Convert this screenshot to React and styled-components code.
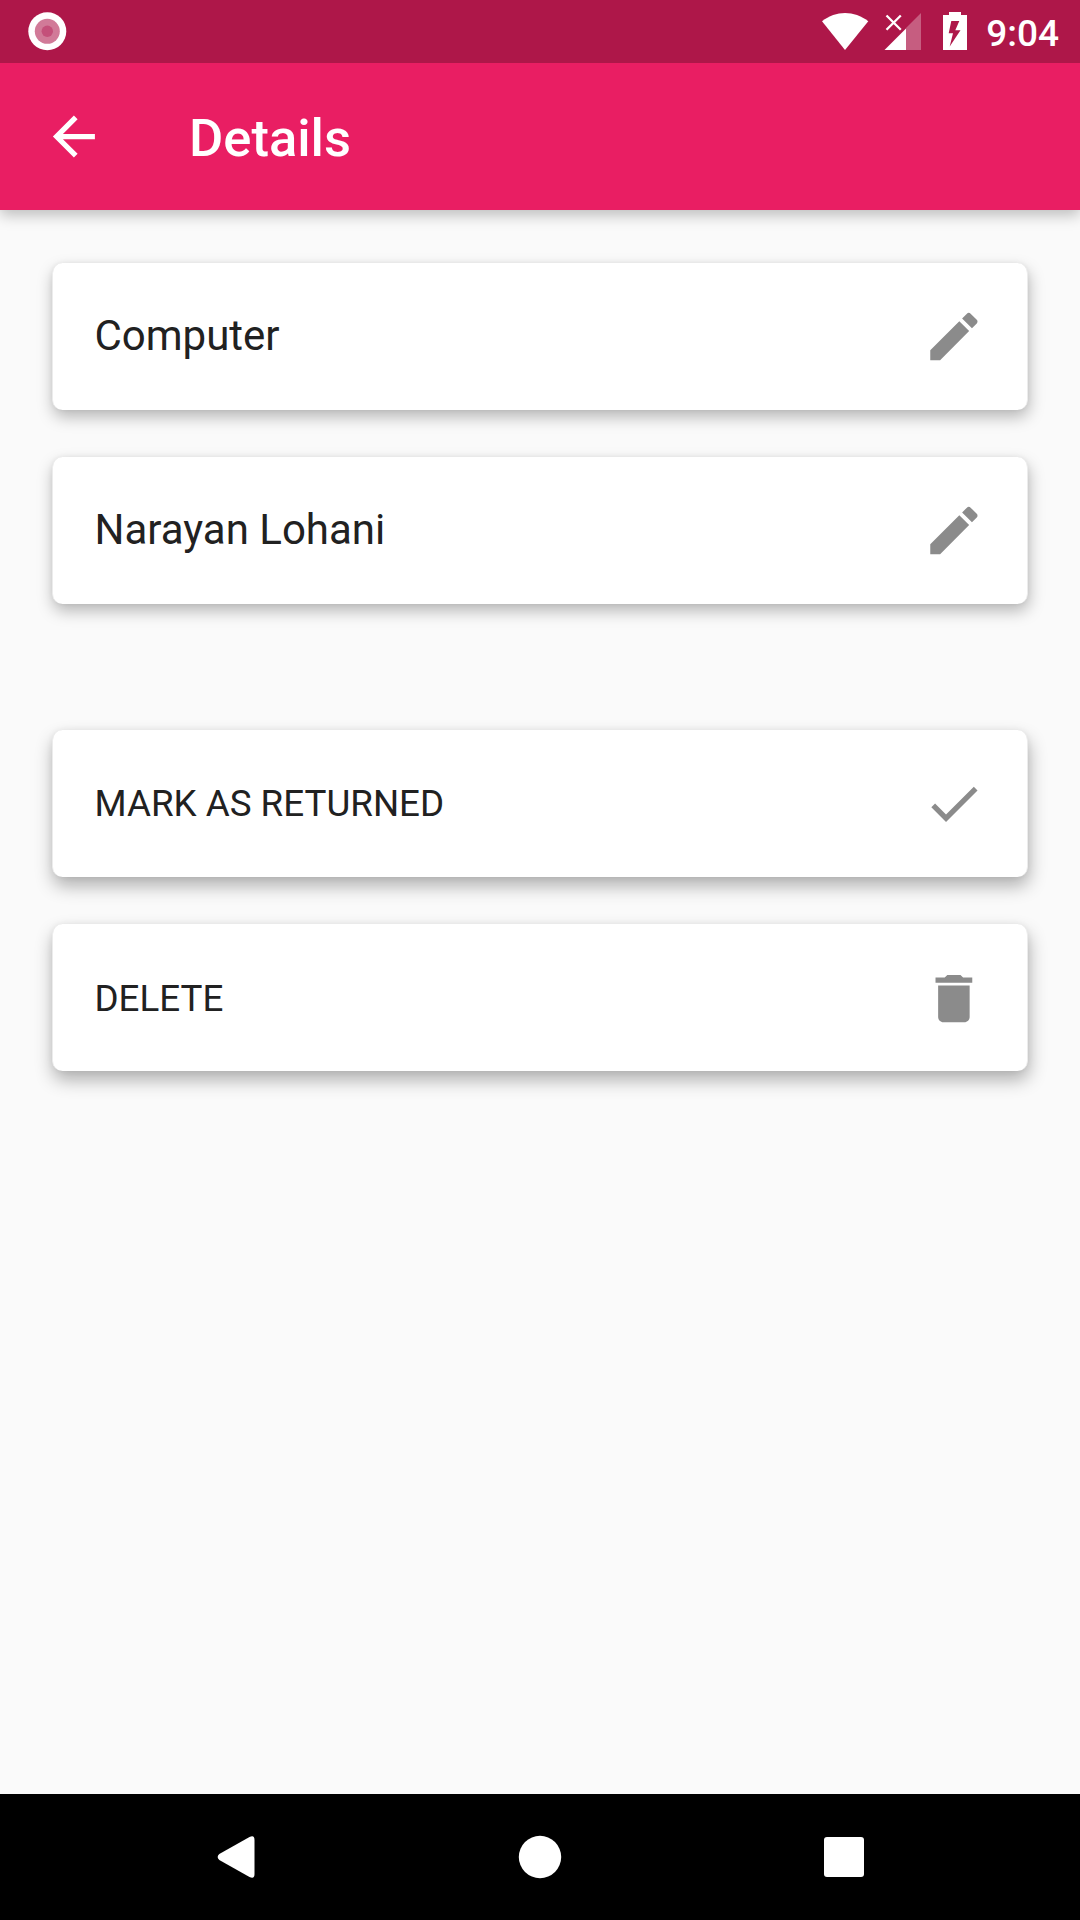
import React from "react";
import styled, { createGlobalStyle } from "styled-components";

const GlobalStyle = createGlobalStyle`
  *, *::before, *::after { box-sizing: border-box; }
  body {
    margin: 0;
    background: #fafafa;
    font-family: Roboto, "Liberation Sans", sans-serif;
  }
  svg { display: block; flex: none; }
`;

const Screen = styled.div`
  display: flex;
  flex-direction: column;
  width: 1080px;
  height: 1920px;
  overflow: hidden;
  background: #fafafa;
`;

const StatusBar = styled.header`
  z-index: 1;
  display: flex;
  justify-content: space-between;
  align-items: center;
  height: 63px;
  flex: none;
  background: #ae1749;
  padding: 0 21px 0 28px;
`;

const StatusIcons = styled.div`
  display: flex;
  align-items: center;
`;

const Clock = styled.span`
  margin-left: 18.5px;
  color: #fff;
  font-size: 37px;
  font-weight: 500;
  line-height: 63px;
  padding-top: 4px;
`;

const AppBar = styled.nav`
  display: flex;
  align-items: center;
  gap: 84px;
  height: 147px;
  flex: none;
  padding: 0 42px;
  background: #e91e63;
  color: #fff;
  box-shadow: 0 5px 14px rgba(0, 0, 0, 0.25);
`;

const BackButton = styled.button`
  display: flex;
  border: 0;
  padding: 0;
  background: none;
  color: inherit;
`;

const Title = styled.h1`
  margin: 0;
  padding-top: 4px;
  font-size: 52.5px;
  font-weight: 500;
  line-height: 63px;
`;

const Content = styled.main`
  flex: 1;
  display: flex;
  flex-direction: column;
  gap: 126px;
  padding: 52.5px 52px;
`;

const Group = styled.section`
  display: flex;
  flex-direction: column;
  gap: 47.25px;
`;

const Card = styled.div`
  display: flex;
  align-items: center;
  justify-content: space-between;
  height: 147px;
  padding: ${(p) => (p.$raised ? "1.2px" : "0")} 42px 0 41.5px;
  border: solid #ececec;
  border-width: 0 1px;
  border-radius: 10.5px;
  background: #fff;
  color: #8b8b8b;
  box-shadow: ${(p) =>
    p.$raised
      ? "1px 9px 18px rgba(0, 0, 0, 0.3), 0 0 6px rgba(0, 0, 0, 0.06)"
      : "1px 7px 16px rgba(0, 0, 0, 0.27), 0 0 5px rgba(0, 0, 0, 0.06)"};
`;

const Label = styled.span`
  color: #212121;
  font-size: ${(p) => (p.$small ? "36.75px" : "42px")};
  line-height: ${(p) => (p.$small ? "43px" : "49px")};
  padding-bottom: ${(p) => (p.$small ? "0" : "0.8px")};
`;

const NavBar = styled.footer`
  display: flex;
  align-items: center;
  justify-content: space-between;
  height: 126px;
  flex: none;
  padding: 0 204px;
  background: #000;
`;

const ICONS = {
  back: "M20 11H7.83l5.59-5.59L12 4l-8 8 8 8 1.41-1.41L7.83 13H20v-2z",
  edit: "M3 17.25V21h3.75L17.81 9.94l-3.75-3.75L3 17.25zM20.71 7.04c.39-.39.39-1.02 0-1.41l-2.34-2.34c-.39-.39-1.02-.39-1.41 0l-1.83 1.83 3.75 3.75 1.83-1.83z",
  check: "M9 16.17L4.83 12l-1.42 1.41L9 19 21 7l-1.41-1.41z",
  trash: "M6 19c0 1.1.9 2 2 2h8c1.1 0 2-.9 2-2V7H6v12zM19 4h-3.5l-1-1h-5l-1 1H5v2h14V4z",
};

const Icon = ({ name }) => (
  <svg width="63" height="63" viewBox="-0.15 0 24 24" fill="currentColor">
    <path d={ICONS[name]} />
  </svg>
);

const groups = [
  [
    { label: "Computer", icon: "edit" },
    { label: "Narayan Lohani", icon: "edit" },
  ],
  [
    { label: "MARK AS RETURNED", icon: "check", action: true },
    { label: "DELETE", icon: "trash", action: true },
  ],
];

export default function App() {
  return (
    <Screen>
      <GlobalStyle />
      <StatusBar>
        <svg width="39" height="63" viewBox="28 0 39 63">
          <circle cx="47.3" cy="31.3" r="19" fill="#fff" />
          <circle cx="47.3" cy="31.3" r="12.5" fill="#d17a98" />
          <circle cx="47.3" cy="31.3" r="5.7" fill="#c4507a" />
        </svg>
        <StatusIcons>
          <svg width="147" height="63" viewBox="821 0 147 63" fill="#fff">
            <path d="M845 50 L822 21.3 C836 10.3 854 10.3 868.3 21.3 Z" />
            <path d="M921 13 V50 H906 V28 Z" fillOpacity="0.3" />
            <path d="M906 28.5 V50 H884.5 Z" />
            <path d="M886.5 15.5 L900.8 29.8 M900.8 15.5 L886.5 29.8" stroke="#fff" strokeWidth="2.3" />
            <path
              fillRule="evenodd"
              d="M949 12 H961 V15 H967 V50 H943 V15 H949 Z M951.3 21 L948.7 33.2 H953 L949.7 46.5 L960.5 30.2 H955.3 L959.3 21 Z"
            />
          </svg>
          <Clock>9:04</Clock>
        </StatusIcons>
      </StatusBar>
      <AppBar>
        <BackButton aria-label="Back">
          <Icon name="back" />
        </BackButton>
        <Title>Details</Title>
      </AppBar>
      <Content>
        {groups.map((cards, i) => (
          <Group key={i}>
            {cards.map((card) => (
              <Card key={card.label} $raised={card.action}>
                <Label $small={card.action}>{card.label}</Label>
                <Icon name={card.icon} />
              </Card>
            ))}
          </Group>
        ))}
      </Content>
      <NavBar>
        <svg width="64" height="64" viewBox="204 1825 64 64">
          <path d="M219.3 1854 L249.5 1837 Q254.5 1834.5 254.5 1840 V1874 Q254.5 1879.5 249.5 1877 L219.3 1860 Q216 1857 219.3 1854 Z" fill="#fff" />
        </svg>
        <svg width="64" height="64" viewBox="508 1825 64 64">
          <circle cx="540" cy="1857" r="21.2" fill="#fff" />
        </svg>
        <svg width="64" height="64" viewBox="812 1825 64 64">
          <rect x="824" y="1837" width="40" height="40" rx="3" fill="#fff" />
        </svg>
      </NavBar>
    </Screen>
  );
}
